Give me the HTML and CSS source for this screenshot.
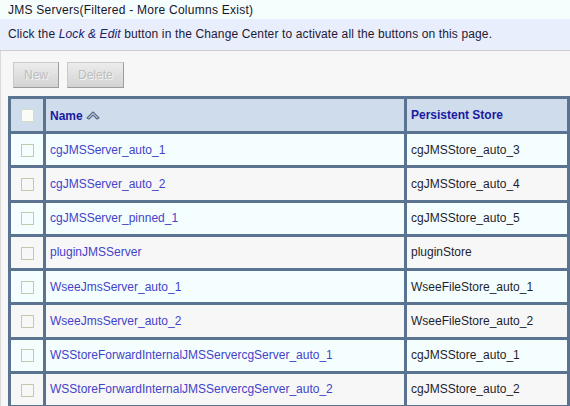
FILE: index.html
```html
<!DOCTYPE html>
<html>
<head>
<meta charset="utf-8">
<link rel="stylesheet" href="styles.css">
</head>
<body>
<div class="title">JMS Servers(Filtered - More Columns Exist)</div>
<div class="info">Click the <em>Lock &amp; Edit</em> button in the Change Center to activate all the buttons on this page.</div>
<div class="panel">
  <div class="buttons">
    <span class="btn">New</span>
    <span class="btn">Delete</span>
  </div>
  <table class="grid">
    <colgroup><col class="c1"><col class="c2"><col class="c3"></colgroup>
    <thead>
      <tr>
        <th class="chk"><span class="box head"></span></th>
        <th><span class="hname">Name</span><svg class="sort" width="14" height="9" viewBox="0 0 14 9"><path d="M1 7 L7 1 L13 7 L11 8 L7 4 L3 8 Z" fill="#d4dcea" stroke="#566a85" stroke-width="1.1" stroke-linejoin="round"/></svg></th>
        <th>Persistent Store</th>
      </tr>
    </thead>
    <tbody>
      <tr><td class="chk"><span class="box"></span></td><td><a>cgJMSServer_auto_1</a></td><td>cgJMSStore_auto_3</td></tr>
      <tr><td class="chk"><span class="box"></span></td><td><a>cgJMSServer_auto_2</a></td><td>cgJMSStore_auto_4</td></tr>
      <tr><td class="chk"><span class="box"></span></td><td><a>cgJMSServer_pinned_1</a></td><td>cgJMSStore_auto_5</td></tr>
      <tr><td class="chk"><span class="box"></span></td><td><a>pluginJMSServer</a></td><td>pluginStore</td></tr>
      <tr><td class="chk"><span class="box"></span></td><td><a>WseeJmsServer_auto_1</a></td><td>WseeFileStore_auto_1</td></tr>
      <tr><td class="chk"><span class="box"></span></td><td><a>WseeJmsServer_auto_2</a></td><td>WseeFileStore_auto_2</td></tr>
      <tr><td class="chk"><span class="box"></span></td><td><a>WSStoreForwardInternalJMSServercgServer_auto_1</a></td><td>cgJMSStore_auto_1</td></tr>
      <tr><td class="chk"><span class="box"></span></td><td><a>WSStoreForwardInternalJMSServercgServer_auto_2</a></td><td>cgJMSStore_auto_2</td></tr>
    </tbody>
  </table>
</div>
</body>
</html>
```
FILE: styles.css
```css
html, body {
  margin: 0;
  padding: 0;
}
body {
  font-family: "Liberation Sans", Arial, sans-serif;
  font-size: 12px;
  color: #1e1e2e;
  background: #f7f7f7;
  width: 570px;
  overflow: hidden;
}
.title {
  height: 19px;
  line-height: 20px;
  padding-left: 8px;
  background: #f6fdfd;
  color: #15152a;
  letter-spacing: 0.25px;
}
.info {
  height: 31px;
  line-height: 31px;
  padding-left: 8px;
  background: #e8eefb;
  border-bottom: 1px solid #cccccc;
  color: #1e1a36;
  letter-spacing: 0.13px;
}
.info em {
  font-style: italic;
  color: #20206a;
}
.panel {
  border-left: 1px solid #dadada;
  background: #f7f7f7;
  padding: 11px 0 0 7px;
}
.buttons {
  display: flex;
  gap: 8px;
  padding-left: 5px;
  height: 26px;
}
.btn {
  display: inline-block;
  box-sizing: border-box;
  height: 26px;
  line-height: 24px;
  padding: 0 10px;
  border: 1px solid;
  border-color: #cacaca #9c9c9c #9c9c9c #cacaca;
  background: linear-gradient(#ececec, #d3d3d3);
  color: #bdbdbd;
  text-shadow: 1px 1px 0 #f3f3f3;
}
.grid {
  margin-top: 8px;
  border-collapse: collapse;
  table-layout: fixed;
  width: 562px;
  border: 3px solid #5a7391;
}
.c1 { width: 35px; }
.c2 { width: 361px; }
.c3 { width: 163px; }
.grid th, .grid td {
  border: 3px solid #5a7391;
  padding: 0 0 0 4px;
  text-align: left;
  white-space: nowrap;
  overflow: hidden;
}
.grid thead tr {
  height: 35px;
}
.grid th {
  background: #cfdcec;
  color: #1a1aa0;
  font-weight: bold;
}
.grid tbody tr {
  height: 34.25px;
}
.grid tbody tr:nth-child(odd) td {
  background: #f5fefe;
}
.grid tbody tr:nth-child(even) td {
  background: #f7f7f7;
}
.grid .chk {
  padding: 0;
  text-align: center;
}
.box {
  display: inline-block;
  vertical-align: middle;
  width: 11px;
  height: 11px;
  border: 1px solid #c4c9ab;
  background: transparent;
}
.box.head {
  background: #fcfcf6;
  border-color: #d6dbc3;
}
.hname {
  vertical-align: middle;
}
.sort {
  vertical-align: middle;
  margin-left: 3px;
}
.grid a {
  color: #4343c9;
  text-decoration: none;
}
```
